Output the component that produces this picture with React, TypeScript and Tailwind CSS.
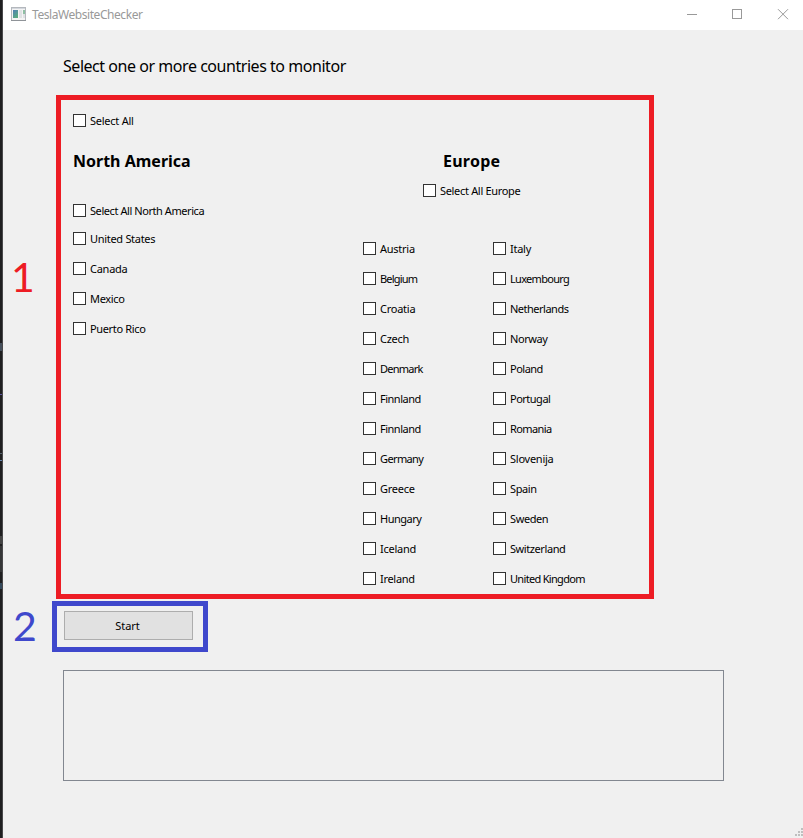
import React from 'react';

const tracking: Record<string, string> = {
  'Select All North America': 'tracking-[-0.43px]',
  'Select All Europe': 'tracking-[-0.32px]',
  'United States': 'tracking-[-0.3px]',
  Mexico: 'tracking-[-0.35px]',
  'Puerto Rico': 'tracking-[-0.35px]',
  Belgium: 'tracking-[-0.8px]',
  Denmark: 'tracking-[-0.75px]',
  Finnland: 'tracking-[-0.5px]',
  Germany: 'tracking-[-0.62px]',
  Hungary: 'tracking-[-0.5px]',
  Ireland: 'tracking-[-0.3px]',
  Luxembourg: 'tracking-[-0.7px]',
  Netherlands: 'tracking-[-0.5px]',
  Norway: 'tracking-[-0.4px]',
  Poland: 'tracking-[-0.5px]',
  Portugal: 'tracking-[-0.5px]',
  Romania: 'tracking-[-0.6px]',
  Spain: 'tracking-[-0.4px]',
  Sweden: 'tracking-[-0.4px]',
  Switzerland: 'tracking-[-0.42px]',
  'United Kingdom': 'tracking-[-0.68px]',
};

function Check({ label }: { label: string }) {
  return (
    <label className="flex h-[13px] items-center gap-[4px] whitespace-nowrap">
      <span className="size-[13px] shrink-0 border border-[#333333] bg-white" />
      <span className={`text-[11px] leading-[13px] text-black ${tracking[label] ?? 'tracking-[-0.25px]'}`}>{label}</span>
    </label>
  );
}

const northAmerica = ['United States', 'Canada', 'Mexico', 'Puerto Rico'];
const europeLeft = ['Austria', 'Belgium', 'Croatia', 'Czech', 'Denmark', 'Finnland', 'Finnland', 'Germany', 'Greece', 'Hungary', 'Iceland', 'Ireland'];
const europeRight = ['Italy', 'Luxembourg', 'Netherlands', 'Norway', 'Poland', 'Portugal', 'Romania', 'Slovenija', 'Spain', 'Sweden', 'Switzerland', 'United Kingdom'];

function List({ items }: { items: string[] }) {
  return (
    <div className="flex flex-col gap-[17px]">
      {items.map((item, i) => (
        <Check key={i} label={item} />
      ))}
    </div>
  );
}

function TitleBar() {
  return (
    <header className="flex h-[30px] shrink-0 items-center bg-white pl-[8px]">
      <svg width="15" height="14" viewBox="0 0 15 14" className="-mt-[2px] shrink-0" shapeRendering="crispEdges">
        <defs>
          <linearGradient id="pane" x1="0" y1="0" x2="0.6" y2="1">
            <stop offset="0" stopColor="#4f7fb5" />
            <stop offset="1" stopColor="#58ab80" />
          </linearGradient>
        </defs>
        <rect x="0.5" y="0.5" width="14" height="13" fill="#f4f4f4" stroke="#b4b8bd" />
        <rect x="0" y="13" width="15" height="1" fill="#8f9398" />
        <rect x="1" y="1" width="13" height="1" fill="#d3d7dd" />
        <rect x="2" y="3" width="5" height="8" fill="url(#pane)" />
        <rect x="8" y="3" width="3" height="8" fill="#dfe2e4" />
        <rect x="12" y="3" width="2" height="4" fill="#8fc0a4" />
        <rect x="12" y="7" width="2" height="4" fill="#dfe2e4" />
      </svg>
      <span className="ml-[6px] text-[12px] leading-[16px] tracking-[-0.44px] text-[#999999]">TeslaWebsiteChecker</span>
      <div className="ml-auto flex h-full">
        <svg width="116" height="30" viewBox="0 0 116 30" fill="none" stroke="#999999">
          <path d="M0 14.5h10" shapeRendering="crispEdges" />
          <rect x="45.5" y="9.5" width="9" height="9" shapeRendering="crispEdges" />
          <path d="M91 9.2l10 10M101 9.2l-10 10" />
        </svg>
      </div>
    </header>
  );
}

export default function App() {
  return (
    <div className="flex h-[838px] w-[803px] overflow-hidden bg-[#f0f0f0] font-['Noto_Sans',sans-serif]">
      <div className="flex w-[3px] shrink-0 flex-col border-r border-[#48484a] bg-[#1f1f20]">
        <div className="mt-[343px] h-[8px] w-[2px] bg-[#46505c]" />
        <div className="mt-[43px] h-px w-[2px] bg-[#5d55a0]" />
        <div className="mt-[58px] h-px w-[2px] bg-[#55606b]" />
        <div className="mt-[6px] h-px w-[2px] bg-[#6684ac]" />
        <div className="mt-[75px] h-[8px] w-[2px] bg-[#444444]" />
        <div className="mt-[2px] h-[26px] w-[2px] bg-[#353637]" />
        <div className="mt-[11px] h-[6px] w-[2px] bg-[#354a5c]" />
      </div>
      <div className="flex min-w-0 flex-1 flex-col">
        <TitleBar />
        <main className="flex flex-1 flex-col">
          <h1 className="mt-[25px] ml-[60px] h-[22px] text-[16px] leading-[22px] tracking-[-0.46px] whitespace-nowrap text-black">
            Select one or more countries to monitor
          </h1>
          <div className="mt-[18px] flex h-[504px]">
            <div className="w-[53px] shrink-0 pt-[158px] pl-[8px] font-[Lato,sans-serif] text-[41px] leading-[48px] text-[#ed1c24]">1</div>
            <section className="flex w-[598px] flex-col border-[5px] border-[#ed1c24] pt-[14px] pl-[12px]">
              <Check label="Select All" />
              <div className="flex">
                <div className="w-[290px] shrink-0">
                  <h2 className="mt-[23px] h-[22px] text-[16px] leading-[22px] font-bold text-black">North America</h2>
                  <div className="mt-[32px] mb-[15px]">
                    <Check label="Select All North America" />
                  </div>
                  <List items={northAmerica} />
                </div>
                <div>
                  <h2 className="mt-[23px] ml-[80px] h-[22px] text-[16px] leading-[22px] font-bold tracking-[0.25px] text-black">Europe</h2>
                  <div className="mt-[12px] ml-[60px]">
                    <Check label="Select All Europe" />
                  </div>
                  <div className="mt-[45px] grid grid-cols-[130px_130px]">
                    <List items={europeLeft} />
                    <List items={europeRight} />
                  </div>
                </div>
              </div>
            </section>
          </div>
          <div className="mt-[2px] flex h-[51px]">
            <div className="w-[49px] shrink-0 pl-[10px] font-[Lato,sans-serif] text-[41px] leading-[50px] text-[#3f48cc]">2</div>
            <div className="w-[156px] border-[5px] border-[#3f48cc] pt-[5px] pl-[7px]">
              <button className="flex h-[29px] w-[129px] items-center justify-center border border-[#adadad] bg-[#e1e1e1] pr-[2px] text-[11px] leading-[13px] text-black">Start</button>
            </div>
          </div>
          <div className="mt-[18px] ml-[60px] h-[111px] w-[661px] border border-[#828790]" />
          <div className="mt-auto flex justify-end">
            <svg width="8" height="10" viewBox="0 0 8 10" fill="#bfbfbf" shapeRendering="crispEdges">
              <path d="M6 0h2v2h-2zM3 3h2v2h-2zM6 3h2v2h-2zM0 6h2v2h-2zM3 6h2v2h-2zM6 6h2v2h-2z" />
            </svg>
          </div>
        </main>
      </div>
    </div>
  );
}
